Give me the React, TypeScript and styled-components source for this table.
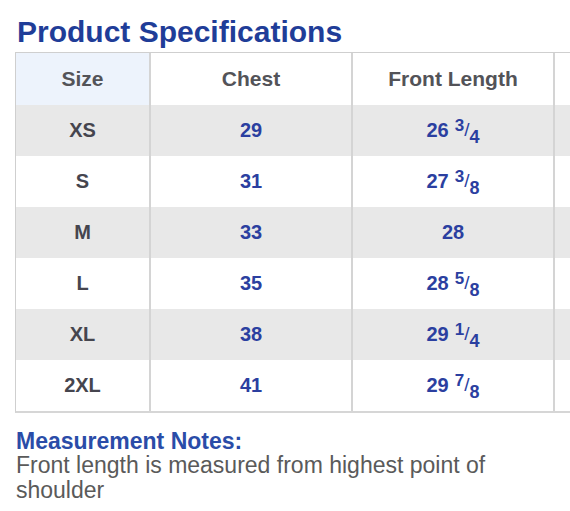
import React from "react";
import styled, { createGlobalStyle } from "styled-components";

const Global = createGlobalStyle`
  html, body { margin: 0; padding: 0; background: #ffffff; overflow: hidden; }
  body { width: 570px; height: 511px; font-family: "Liberation Sans", Arial, sans-serif; }
`;

const Page = styled.div`
  width: 570px;
  height: 511px;
  overflow: hidden;
  padding: 16px 0 0 15px;
  box-sizing: border-box;
`;

const Title = styled.h1`
  margin: 0 0 4px 2px;
  font-size: 30px;
  line-height: 32px;
  font-weight: 700;
  color: #1f3d98;
`;

const Table = styled.div`
  display: grid;
  grid-template-columns: 135px 202px 202px 202px;
  width: max-content;
  border: 1px solid #cfcfcf;
  border-right: none;
  border-bottom: 2px solid #d6d6d6;
`;

const Cell = styled.div<{ $head?: boolean; $first?: boolean; $stripe?: boolean; $tone: "head" | "size" | "value" }>`
  height: ${(p) => (p.$head ? 52 : 51)}px;
  box-sizing: border-box;
  display: flex;
  align-items: center;
  justify-content: center;
  border-right: 2px solid #d4d4d4;
  background: ${(p) => (p.$head && p.$first ? "#edf3fc" : p.$stripe ? "#e8e8e8" : "#ffffff")};
  font-weight: 700;
  font-size: ${(p) => (p.$tone === "head" ? 21 : 20)}px;
  color: ${(p) => (p.$tone === "value" ? "#2b3fa0" : p.$tone === "size" ? "#45454e" : "#535358")};
`;

const Frac = styled.span`
  display: inline-flex;
  align-items: flex-start;
  margin-left: 6px;
  font-size: 17px;
  line-height: 1;
`;

const Num = styled.span`
  position: relative;
  top: -5px;
`;

const Slash = styled.span`
  font-weight: 400;
  font-size: 19px;
  margin: -2px 0 0 0;
`;

const Den = styled.span`
  position: relative;
  top: 6px;
  font-size: 18px;
`;

const Notes = styled.div`
  margin-top: 16px;
  padding-left: 1px;
`;

const NotesTitle = styled.div`
  font-size: 23px;
  line-height: 24px;
  font-weight: 700;
  color: #2a4ca8;
`;

const NotesText = styled.div`
  font-size: 23px;
  line-height: 25px;
  color: #5a5a5a;
  width: 530px;
`;

type Row = { size: string; chest: string; len: string; frac?: [string, string] };

const rows: Row[] = [
  { size: "XS", chest: "29", len: "26", frac: ["3", "4"] },
  { size: "S", chest: "31", len: "27", frac: ["3", "8"] },
  { size: "M", chest: "33", len: "28" },
  { size: "L", chest: "35", len: "28", frac: ["5", "8"] },
  { size: "XL", chest: "38", len: "29", frac: ["1", "4"] },
  { size: "2XL", chest: "41", len: "29", frac: ["7", "8"] },
];

export default function App() {
  return (
    <Page>
      <Global />
      <Title>Product Specifications</Title>
      <Table>
        <Cell $head $first $tone="head">Size</Cell>
        <Cell $head $tone="head">Chest</Cell>
        <Cell $head $tone="head">Front Length</Cell>
        <Cell $head $tone="head" />
        {rows.map((r, i) => (
          <React.Fragment key={r.size}>
            <Cell $stripe={i % 2 === 0} $tone="size">{r.size}</Cell>
            <Cell $stripe={i % 2 === 0} $tone="value">{r.chest}</Cell>
            <Cell $stripe={i % 2 === 0} $tone="value">
              {r.len}
              {r.frac && (
                <Frac>
                  <Num>{r.frac[0]}</Num>
                  <Slash>/</Slash>
                  <Den>{r.frac[1]}</Den>
                </Frac>
              )}
            </Cell>
            <Cell $stripe={i % 2 === 0} $tone="value" />
          </React.Fragment>
        ))}
      </Table>
      <Notes>
        <NotesTitle>Measurement Notes:</NotesTitle>
        <NotesText>Front length is measured from highest point of shoulder</NotesText>
      </Notes>
    </Page>
  );
}
